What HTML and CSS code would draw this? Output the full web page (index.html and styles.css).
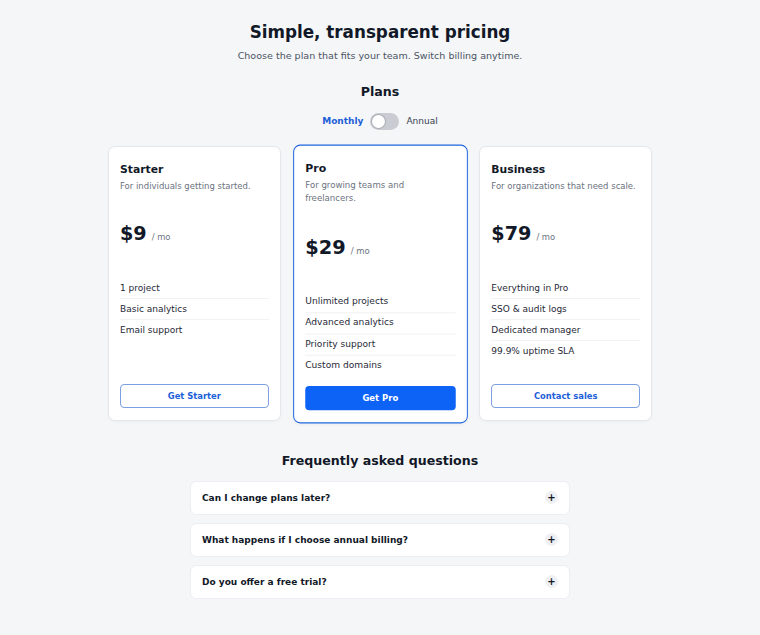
FILE: index.html
```html
<!DOCTYPE html>
<html lang="en">
<head>
  <meta charset="UTF-8">
  <title>Pricing</title>
  <link rel="stylesheet" href="styles.css">
</head>
<body>

  <main class="page">
    <header class="hero">
      <h1>Simple, transparent pricing</h1>
      <p>Choose the plan that fits your team. Switch billing anytime.</p>
    </header>

    <section class="plans">
      <h2>Plans</h2>

      <div class="billing">
        <span class="billing-label active">Monthly</span>
        <button class="switch" type="button" aria-label="Toggle annual billing"><span class="knob"></span></button>
        <span class="billing-label">Annual</span>
      </div>

      <div class="cards">
        <div class="card">
          <h3>Starter</h3>
          <p class="desc">For individuals getting started.</p>
          <div class="price"><span class="amount">$9</span><span class="per">/ mo</span></div>
          <ul class="features">
            <li>1 project</li>
            <li>Basic analytics</li>
            <li>Email support</li>
          </ul>
          <button class="btn btn-outline" type="button">Get Starter</button>
        </div>

        <div class="card featured">
          <h3>Pro</h3>
          <p class="desc">For growing teams and freelancers.</p>
          <div class="price"><span class="amount">$29</span><span class="per">/ mo</span></div>
          <ul class="features">
            <li>Unlimited projects</li>
            <li>Advanced analytics</li>
            <li>Priority support</li>
            <li>Custom domains</li>
          </ul>
          <button class="btn btn-primary" type="button">Get Pro</button>
        </div>

        <div class="card">
          <h3>Business</h3>
          <p class="desc">For organizations that need scale.</p>
          <div class="price"><span class="amount">$79</span><span class="per">/ mo</span></div>
          <ul class="features">
            <li>Everything in Pro</li>
            <li>SSO &amp; audit logs</li>
            <li>Dedicated manager</li>
            <li>99.9% uptime SLA</li>
          </ul>
          <button class="btn btn-outline" type="button">Contact sales</button>
        </div>
      </div>
    </section>

    <section class="faq">
      <h2>Frequently asked questions</h2>

      <div class="faq-item">
        <span>Can I change plans later?</span>
        <span class="plus">+</span>
      </div>
      <div class="faq-item">
        <span>What happens if I choose annual billing?</span>
        <span class="plus">+</span>
      </div>
      <div class="faq-item">
        <span>Do you offer a free trial?</span>
        <span class="plus">+</span>
      </div>
    </section>
  </main>

</body>
</html>
```

FILE: styles.css
```css
body {
  font-family: "DejaVu Sans", sans-serif;
  background-color: #f5f6f8;
  color: #111827;
  margin: 0;
  padding: 0;
}

.page {
  max-width: 544px;
  margin: 0 auto;
  padding: 22px 0;
}

/* header */
.hero {
  text-align: center;
}

.hero h1 {
  margin: 0;
  font-size: 16.8px;
  line-height: 1.2;
  color: #111827;
}

.hero p {
  margin: 8px 0 0;
  font-size: 9.55px;
  color: #4b5563;
}

/* plans */
.plans {
  margin-top: 23px;
}

.plans h2,
.faq h2 {
  margin: 0;
  text-align: center;
  font-size: 12.6px;
  line-height: 1.3;
}

.billing {
  display: flex;
  justify-content: center;
  align-items: center;
  gap: 7px;
  margin-top: 12px;
}

.billing-label {
  font-size: 9px;
  color: #374151;
}

.billing-label.active {
  color: #1d5fd8;
  font-weight: bold;
}

.switch {
  width: 29px;
  height: 17px;
  border: none;
  border-radius: 9px;
  background-color: #c9cdd3;
  padding: 2px;
  display: flex;
  align-items: center;
  cursor: pointer;
}

.knob {
  width: 13px;
  height: 13px;
  border-radius: 50%;
  background-color: #ffffff;
  box-shadow: 0 0 0 1px rgba(0, 0, 0, 0.15);
}

.cards {
  display: grid;
  grid-template-columns: repeat(3, 1fr);
  gap: 13px;
  margin-top: 16px;
}

.card {
  display: flex;
  flex-direction: column;
  background-color: #ffffff;
  border: 1px solid #e5e7eb;
  border-radius: 7px;
  padding: 15px 11px 12px;
  box-shadow: 0 1px 3px rgba(0, 0, 0, 0.04);
}

.card.featured {
  border: 1.5px solid #1f66e0;
  transform: scale(1.01);
}

.card h3 {
  margin: 0;
  font-size: 10.8px;
  line-height: 1.4;
}

.desc {
  margin: 3px 0 0;
  font-size: 8.5px;
  line-height: 1.5;
  color: #6b7280;
}

.price {
  display: flex;
  align-items: baseline;
  gap: 5px;
  margin-top: 30px;
}

.amount {
  font-size: 19.2px;
  font-weight: bold;
  line-height: 1.2;
}

.per {
  font-size: 8.4px;
  color: #6b7280;
}

.features {
  list-style: none;
  margin: 33px 0 10px;
  padding: 0;
}

.features li {
  font-size: 9px;
  color: #1f2937;
  padding: 3.5px 0;
  line-height: 13px;
  border-bottom: 1px solid #f1f2f4;
}

.features li:last-child {
  border-bottom: none;
}

.btn {
  margin-top: auto;
  height: 24px;
  border-radius: 4px;
  font-family: inherit;
  font-size: 8.4px;
  font-weight: bold;
  cursor: pointer;
}

.btn-outline {
  background-color: #ffffff;
  color: #1d5fd8;
  border: 1px solid #7c9fdf;
}

.btn-primary {
  background-color: #0d63f6;
  color: #ffffff;
  border: none;
}

/* faq */
.faq {
  max-width: 380px;
  margin: 32px auto 0;
}

.faq h2 {
  margin-bottom: 11px;
}

.faq-item {
  display: flex;
  justify-content: space-between;
  align-items: center;
  height: 34px;
  box-sizing: border-box;
  padding: 0 11px;
  margin-bottom: 8px;
  background-color: #ffffff;
  border: 1px solid #eceef1;
  border-radius: 6px;
  font-size: 9px;
  font-weight: bold;
}

.plus {
  width: 13px;
  height: 13px;
  border-radius: 50%;
  background-color: #eef0f3;
  display: flex;
  align-items: center;
  justify-content: center;
  font-size: 10px;
  line-height: 1;
  color: #111827;
}
```
